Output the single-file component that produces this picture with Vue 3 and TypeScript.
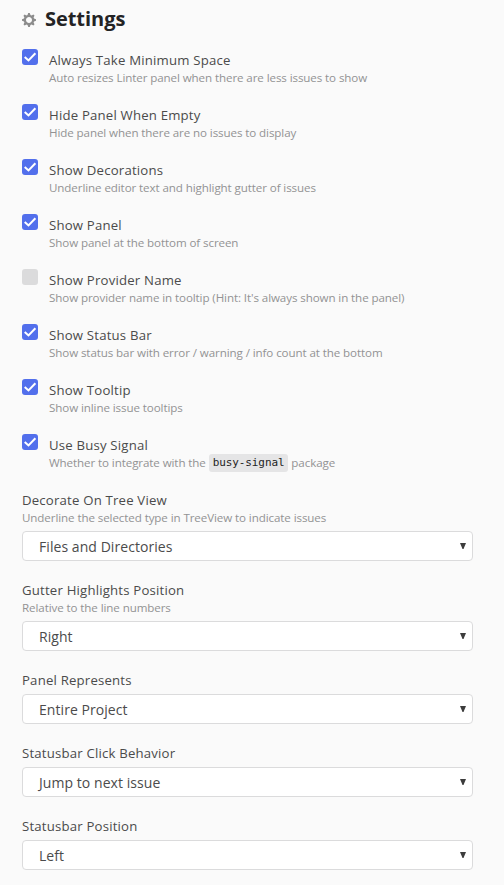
<script setup lang="ts">
import { ref } from 'vue'

interface Toggle {
  label: string
  before: string
  code?: string
  after?: string
  checked: boolean
}

interface Choice {
  label: string
  hint?: string
  value: string
}

const toggles = ref<Toggle[]>([
  { label: 'Always Take Minimum Space', before: 'Auto resizes Linter panel when there are less issues to show', checked: true },
  { label: 'Hide Panel When Empty', before: 'Hide panel when there are no issues to display', checked: true },
  { label: 'Show Decorations', before: 'Underline editor text and highlight gutter of issues', checked: true },
  { label: 'Show Panel', before: 'Show panel at the bottom of screen', checked: true },
  { label: 'Show Provider Name', before: "Show provider name in tooltip (Hint: It's always shown in the panel)", checked: false },
  { label: 'Show Status Bar', before: 'Show status bar with error / warning / info count at the bottom', checked: true },
  { label: 'Show Tooltip', before: 'Show inline issue tooltips', checked: true },
  { label: 'Use Busy Signal', before: 'Whether to integrate with the', code: 'busy-signal', after: 'package', checked: true },
])

const choices: Choice[] = [
  { label: 'Decorate On Tree View', hint: 'Underline the selected type in TreeView to indicate issues', value: 'Files and Directories' },
  { label: 'Gutter Highlights Position', hint: 'Relative to the line numbers', value: 'Right' },
  { label: 'Panel Represents', value: 'Entire Project' },
  { label: 'Statusbar Click Behavior', value: 'Jump to next issue' },
  { label: 'Statusbar Position', value: 'Left' },
]
</script>

<template>
  <main class="settings">
    <h1 class="heading">
      <svg class="gear" viewBox="0 0 14 16" aria-hidden="true">
        <path fill-rule="evenodd" d="M14 8.77v-1.6l-1.94-.64-.45-1.09.88-1.84-1.13-1.13-1.81.91-1.09-.45-.69-1.92h-1.6l-.63 1.94-1.11.45-1.84-.88-1.13 1.13.91 1.81-.45 1.09L0 7.23v1.59l1.94.64.45 1.09-.88 1.84 1.13 1.13 1.81-.91 1.09.45.69 1.92h1.59l.63-1.94 1.11-.45 1.84.88 1.13-1.13-.92-1.81.47-1.09L14 8.75v.02zM7 11c-1.66 0-3-1.34-3-3s1.34-3 3-3 3 1.34 3 3-1.34 3-3 3z" />
      </svg>
      <span>Settings</span>
    </h1>

    <label v-for="item in toggles" :key="item.label" class="toggle" @click.prevent="item.checked = !item.checked">
      <span class="box" :class="{ on: item.checked }">
        <svg v-if="item.checked" viewBox="0 0 16 16" aria-hidden="true">
          <path d="M2.7 7.9 6.5 11.4 13.4 4.2" />
        </svg>
      </span>
      <span class="copy">
        <span class="title">{{ item.label }}</span>
        <span class="hint">{{ item.before }}<template v-if="item.code">&nbsp;<code>{{ item.code }}</code>&nbsp;{{ item.after }}</template></span>
      </span>
    </label>

    <section v-for="item in choices" :key="item.label" class="choice">
      <span class="title">{{ item.label }}</span>
      <span v-if="item.hint" class="hint">{{ item.hint }}</span>
      <div class="select" :class="{ hinted: item.hint }">
        <span>{{ item.value }}</span>
        <svg class="arrow" viewBox="0 0 6 6" aria-hidden="true"><path d="M0 0h6L3.5 6h-1z" /></svg>
      </div>
    </section>
  </main>
</template>

<style>
body {
  background: #fafafa;
}
</style>

<style scoped>
.settings {
  box-sizing: border-box;
  height: 885px;
  overflow: hidden;
  padding: 5px 31px 0 22px;
  background: #fafafa;
  color: #4b4b4b;
  font-family: "Open Sans", "Noto Sans", sans-serif;
}

.heading {
  display: flex;
  align-items: center;
  gap: 9px;
  height: 28px;
  margin: 0 0 16px;
  color: #232324;
  font-size: 20px;
  font-weight: 700;
  line-height: 28px;
  letter-spacing: -0.05px;
}

.gear {
  width: 14px;
  height: 16px;
  margin-top: 2px;
  fill: #8c8c8c;
}

.toggle {
  display: flex;
  gap: 11px;
  height: 55px;
}

.box {
  flex: none;
  width: 16px;
  height: 16px;
  border-radius: 3px;
  background: #dbdbdc;
}

.box.on {
  background: #526fec;
}

.box svg {
  display: block;
  width: 16px;
  height: 16px;
  fill: none;
  stroke: #fff;
  stroke-width: 2;
}

.copy {
  padding-top: 1px;
}

.title,
.hint {
  display: block;
  white-space: nowrap;
}

.title {
  height: 20px;
  font-size: 13.2px;
  line-height: 20px;
  letter-spacing: 0.19px;
}

.hint {
  height: 16px;
  color: #939394;
  font-size: 11.6px;
  line-height: 16px;
  letter-spacing: -0.1px;
}

code {
  display: inline-block;
  height: 18px;
  margin-top: -1px;
  padding: 0 4px;
  border-radius: 3px;
  background: #e5e5e6;
  color: #232324;
  font-family: "DejaVu Sans Mono", monospace;
  font-size: 11px;
  line-height: 18px;
  letter-spacing: -0.1px;
  vertical-align: top;
}

.choice {
  padding-top: 1px;
  margin-bottom: 18px;
}

.select {
  box-sizing: border-box;
  display: flex;
  align-items: center;
  justify-content: space-between;
  height: 30px;
  margin-top: 4px;
  padding: 2px 6px 0 16px;
  border: 1px solid #dbdbdc;
  border-radius: 4px;
  background: #fff;
  font-size: 14px;
  line-height: 20px;
  letter-spacing: 0.06px;
}

.select.hinted {
  margin-top: 5px;
}

.arrow {
  width: 6px;
  height: 6px;
  margin-top: -2px;
  fill: #3c3c3c;
}
</style>
